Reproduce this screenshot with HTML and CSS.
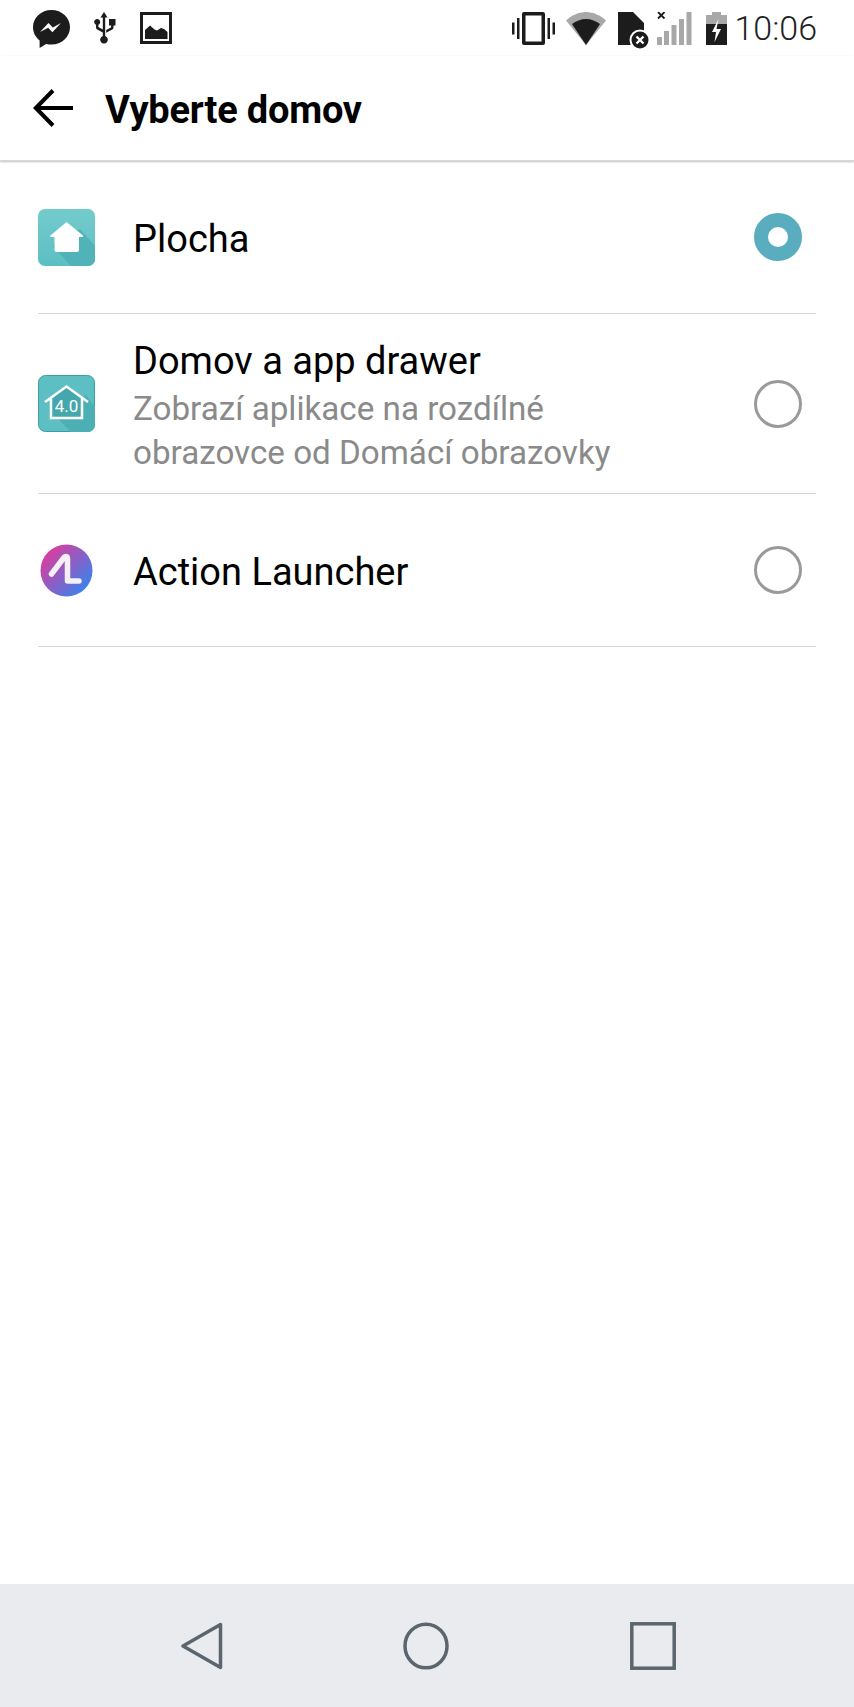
FILE: index.html
```html
<!DOCTYPE html>
<html>
	<head>
		<meta charset="UTF-8">
		<title>Vyberte domov</title>
		<link rel="stylesheet" href="styles.css">
	</head>
	<body>
		<div id="status">
			<div class="status-left">
				<svg class="ic-messenger" viewBox="0 0 37 38"><path fill="#1c1c1c" d="M18.500 0C8.300 0 0 7.700 0 17.200c0 5.300 2.600 10 6.600 13.200V38l6.500-4.100c1.700.5 3.500.7 5.400.7 10.200 0 18.500-7.700 18.500-17.400S28.700 0 18.500 0z"/><path fill="#fff" d="M7 22l8.500-9 4.300 4.400 8.200-4.400-8.600 9.200-4.200-4.500z"/></svg>
				<svg class="ic-usb" viewBox="0 0 24 33"><path fill="#1c1c1c" d="M12 0l3.600 5.500h-2.400v18.600a3.800 3.800 0 1 1-2.400 0V20.500l-5.600-3.100c-.8-.4-1.200-1.100-1.200-2v-2.600a3 3 0 1 1 2.400 0v2.300l4.400 2.500V5.500H8.400zM17 7h6.500v6.500h-2v2c0 .9-.4 1.600-1.200 2l-6.100 3.300v-2.700l4.600-2.500c.2-.1.300-.2.300-.4V13.500H17z"/></svg>
				<svg class="ic-image" viewBox="0 0 32 32"><path fill="#1c1c1c" d="M0 0h32v32H0zM3 3v26h26V3z"/><path fill="#1c1c1c" d="M5 27V18l5-4.500 4.500 4 2.500 1 4-2.500 3 1 3.500 3V27z"/></svg>
			</div>
			<div class="status-right">
				<svg class="ic-vibrate" viewBox="0 0 43 33"><path fill="#1c1c1c" d="M12 0h19a2 2 0 0 1 2 2v29a2 2 0 0 1-2 2H12a2 2 0 0 1-2-2V2a2 2 0 0 1 2-2zm1.500 3.500v26h16v-26zM5 6h2.500v21H5zM35.500 6H38v21h-2.500zM0 10.500h2.500v12H0zM40.500 10.500H43v12h-2.500z"/></svg>
				<svg class="ic-wifi" viewBox="0 0 40 33"><path fill="#a8a8a8" d="M0 8.500C5.500 3.500 12.500 0 20 0s14.500 3.500 20 8.500L20 33z"/><path fill="#1c1c1c" d="M6 12c4-3 9-5 14-5s10 2 14 5L20 33z"/></svg>
				<svg class="ic-sim" viewBox="0 0 31 37"><path fill="#1c1c1c" d="M0 0h15l11 11v22H0z"/><circle cx="22" cy="28" r="9.500" fill="#1c1c1c" stroke="#fff" stroke-width="2"/><path stroke="#fff" stroke-width="2.400" d="M18.500 24.500l7 7m0-7l-7 7"/></svg>
				<svg class="ic-signal" viewBox="0 0 35 33"><path stroke="#1c1c1c" stroke-width="1.800" d="M1 0l6.500 6.500m0-6.500L1 6.500"/><path fill="#a8a8a8" d="M0 25h5v8H0zM7 19h5v14H7zM14.500 13h5v20h-5zM22 7h5v26h-5zM29.500 0h5v33h-5z"/></svg>
				<svg class="ic-battery" viewBox="0 0 21 33"><path fill="#a8a8a8" d="M6 0h9v3h6v11H0V3h6z"/><path fill="#1c1c1c" d="M0 12h21v21H0z"/><path fill="#fff" d="M12.500 7L6 20h4l-1.500 10 6.500-13h-4.500z"/></svg>
				<span class="clock">10:06</span>
			</div>
		</div>
		<div id="toolbar">
			<svg class="ic-back" viewBox="0 0 40 38"><path fill="none" stroke="#000" stroke-width="4" d="M40 19H3M20 1.500L2.800 19 20 36.500"/></svg>
			<h1>Vyberte domov</h1>
		</div>
		<ul id="homes">
			<li class="home home-first">
				<svg class="app-icon" viewBox="0 0 57 57"><defs><linearGradient id="teal" x1="0" y1="0" x2="0" y2="1"><stop offset="0" stop-color="#74cbcd"/><stop offset="1" stop-color="#5cbfc3"/></linearGradient></defs><rect width="57" height="57" rx="7" fill="url(#teal)"/><path fill="#4fb3b8" d="M15 37l27-17 15 17v13a7 7 0 0 1-7 7H33z"/><path fill="#fff" d="M28.500 13l16.500 13.500c.6.600.2 1.500-.6 1.500h-3.400v13a2 2 0 0 1-2 2H18.500a2 2 0 0 1-2-2V28h-3.400c-.8 0-1.200-.9-.6-1.500z"/></svg>
				<div class="home-text"><div class="home-name">Plocha</div></div>
				<span class="radio radio-on"></span>
			</li>
			<li class="home home-tall">
				<svg class="app-icon" viewBox="0 0 57 57"><rect x=".5" y=".5" width="56" height="56" rx="7" fill="#5dbfc3" stroke="#3c9ea3"/><path fill="#4cafb4" d="M20 44l28-24 9 12v18a7 7 0 0 1-7 7H33z"/><path fill="#44a7ad" d="M13 24l15.500-12L44 24v19H13z"/><path fill="none" stroke="#fff" stroke-width="2.500" d="M7 27l21.500-15.500L50 27M13 23v20h31V23"/><text x="28.500" y="36.500" class="icon-ver">4.0</text></svg>
				<div class="home-text">
					<div class="home-name">Domov a app drawer</div>
					<div class="home-desc">Zobrazí aplikace na rozdílné obrazovce od Domácí obrazovky</div>
				</div>
				<span class="radio"></span>
			</li>
			<li class="home home-last">
				<svg class="app-icon" viewBox="0 0 57 57"><defs><linearGradient id="action" x1=".1" y1=".15" x2=".85" y2=".85"><stop offset="0" stop-color="#dc3c9e"/><stop offset="1" stop-color="#3f80ea"/></linearGradient></defs><circle cx="28.500" cy="28.500" r="26" fill="url(#action)"/><path fill="none" stroke="#f4f0f6" stroke-width="5.500" stroke-linecap="round" stroke-linejoin="round" d="M13.500 32L26 15.500c1.500-1.500 3.500-1 3.500 1V39H41"/></svg>
				<div class="home-text"><div class="home-name">Action Launcher</div></div>
				<span class="radio"></span>
			</li>
		</ul>
		<div id="navbar">
			<svg class="nav-ic" viewBox="0 0 42 48"><path fill="none" stroke="#5a656e" stroke-width="3.500" stroke-linejoin="round" d="M39.500 2.500v43L2 24z"/></svg>
			<svg class="nav-ic" viewBox="0 0 46 48"><ellipse cx="23" cy="24" rx="21" ry="21.800" fill="none" stroke="#5a656e" stroke-width="3.500"/></svg>
			<svg class="nav-ic" viewBox="0 0 46 48"><rect x="1.800" y="1.800" width="42.400" height="44.400" fill="none" stroke="#5a656e" stroke-width="3.500"/></svg>
		</div>
	</body>
</html>
```
FILE: styles.css
```css
* {
	margin: 0;
	padding: 0;
	box-sizing: border-box;
}
body {
	width: 854px;
	height: 1707px;
	display: flex;
	flex-direction: column;
	background-color: #fff;
	font-family: Roboto, "Noto Sans", sans-serif;
	color: #000;
	overflow: hidden;
}
#status {
	height: 56px;
	display: flex;
	justify-content: space-between;
	align-items: flex-start;
	padding: 10px 37px 0 33px;
}
.status-left, .status-right {
	display: flex;
	align-items: flex-start;
}
.ic-messenger {
	width: 37px;
	height: 38px;
	margin-right: 22px;
}
.ic-usb {
	width: 24px;
	height: 33px;
	margin: 2px 24px 0 0;
}
.ic-image {
	width: 32px;
	height: 32px;
	margin-top: 2px;
}
.ic-vibrate {
	width: 43px;
	height: 33px;
	margin: 2px 11px 0 0;
}
.ic-wifi {
	width: 40px;
	height: 33px;
	margin: 2px 12px 0 0;
}
.ic-sim {
	width: 31px;
	height: 37px;
	margin: 2px 8px 0 0;
}
.ic-signal {
	width: 35px;
	height: 33px;
	margin: 2px 14px 0 0;
}
.ic-battery {
	width: 21px;
	height: 33px;
	margin: 2px 7px 0 0;
}
.clock {
	font-size: 34px;
	font-weight: 300;
	line-height: 36px;
	color: #222;
}
#toolbar {
	height: 105px;
	display: flex;
	align-items: center;
	padding-left: 33px;
	border-bottom: 1px solid #d8d8d8;
	box-shadow: 0 1px 2px rgba(0, 0, 0, 0.25);
}
.ic-back {
	width: 40px;
	height: 38px;
	margin: 0 32px 0 0;
}
#toolbar h1 {
	font-size: 38px;
	font-weight: 700;
	letter-spacing: -0.2px;
	padding-top: 4px;
}
#homes {
	flex: 1;
	list-style: none;
	padding: 0 38px;
}
.home {
	display: flex;
	align-items: center;
	border-bottom: 1px solid #d6d6d6;
}
.home-first {
	height: 153px;
}
.home-tall {
	height: 180px;
}
.home-last {
	height: 153px;
}
.app-icon {
	width: 57px;
	height: 57px;
	flex: none;
	margin-right: 38px;
}
.icon-ver {
	font-size: 17px;
	fill: #fff;
	text-anchor: middle;
}
.home-text {
	flex: 1;
}
.home-name {
	font-size: 38px;
	line-height: 46px;
}
.home-first .home-name, .home-last .home-name {
	padding-top: 4px;
}
.home-tall .home-name {
	margin-top: 5px;
}
.home-desc {
	font-size: 33.2px;
	line-height: 44px;
	padding-top: 3px;
	color: #8a8a8a;
	width: 520px;
}
.radio {
	width: 48px;
	height: 48px;
	margin-right: 14px;
	border: 3px solid #9a9a9a;
	border-radius: 50%;
	flex: none;
}
.radio-on {
	border: 14px solid #5aacbf;
}
#navbar {
	height: 123px;
	background-color: #e9ebef;
	display: flex;
	align-items: center;
	padding-left: 181px;
}
.nav-ic {
	height: 48px;
	width: 46px;
	flex: none;
	margin-right: 181px;
}
.nav-ic:first-child {
	width: 42px;
	margin-right: 180px;
}
```
